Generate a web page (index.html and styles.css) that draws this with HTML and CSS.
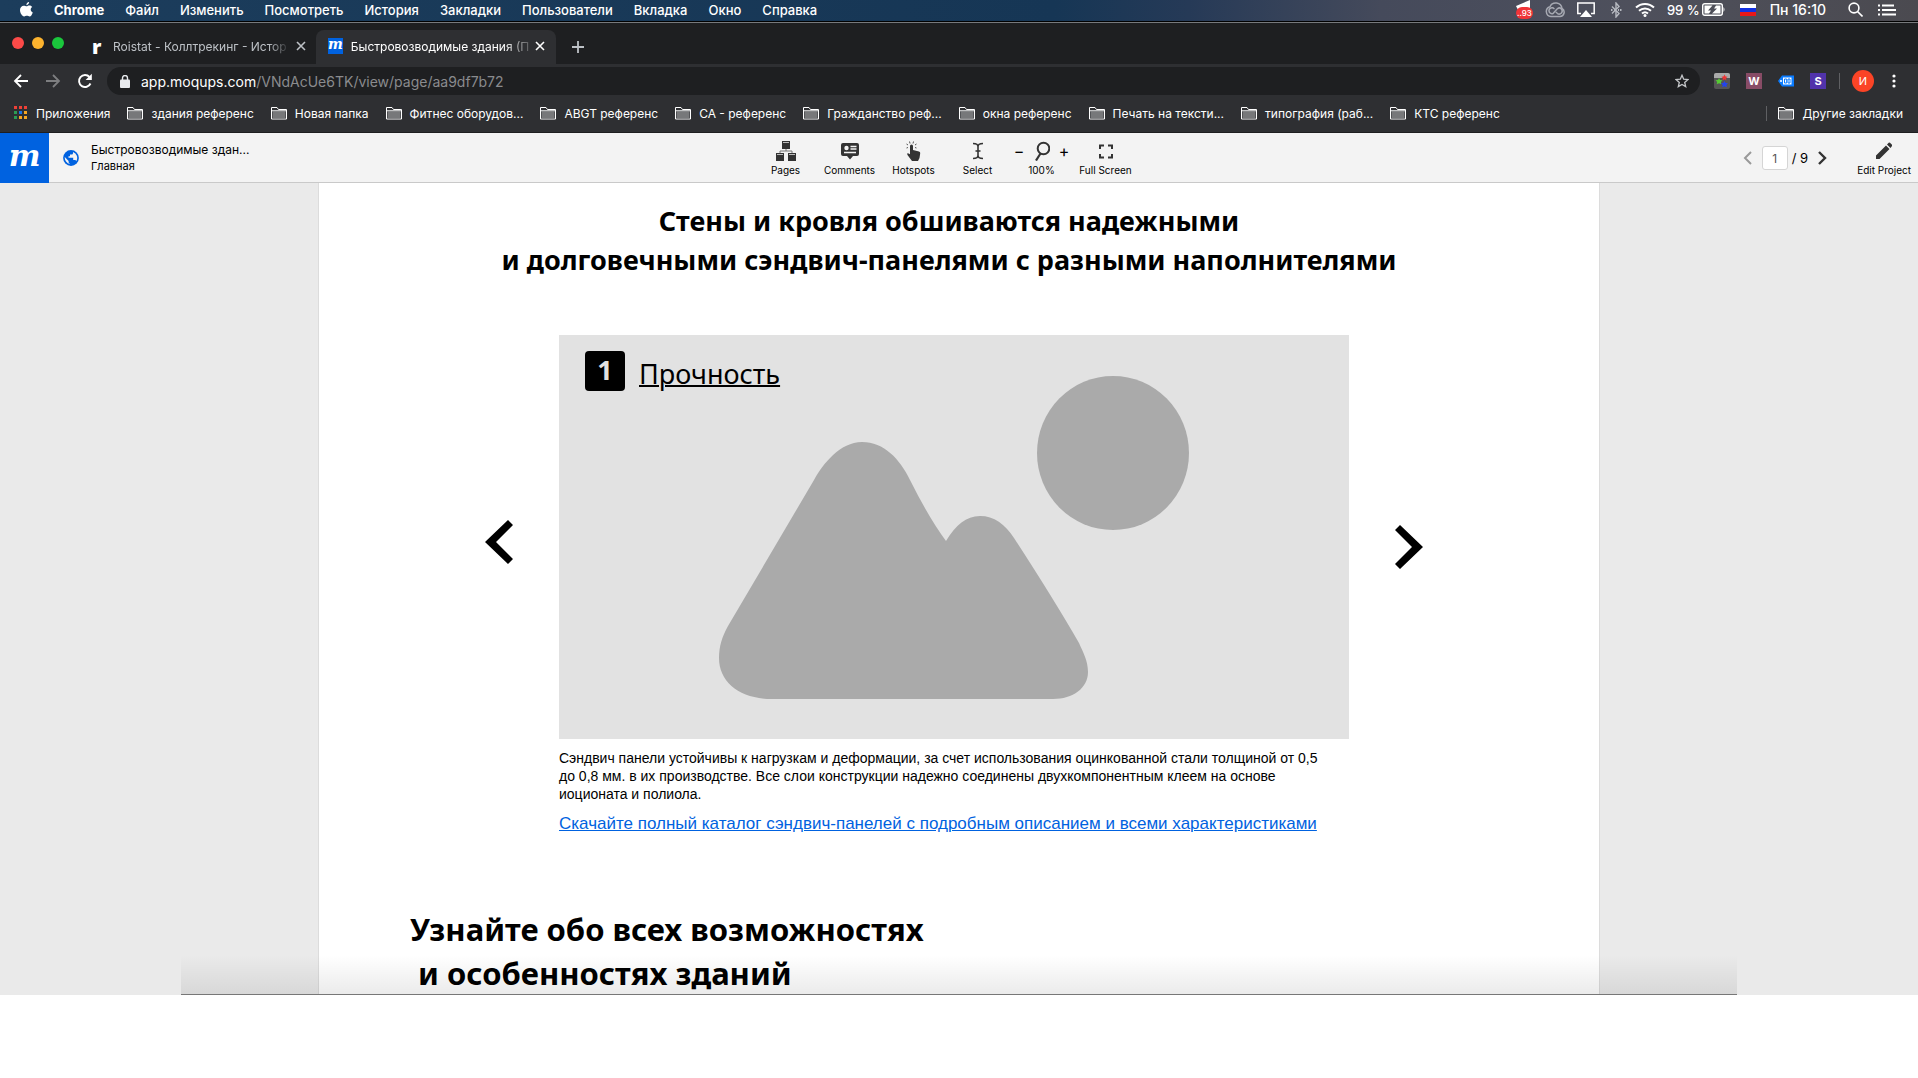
FILE: index.html
```html
<!DOCTYPE html>
<html lang="ru">
<head>
<meta charset="utf-8">
<title>Быстровозводимые здания</title>
<link rel="stylesheet" href="styles.css">
</head>
<body>
<svg class="defs" aria-hidden="true">
  <symbol id="folder" viewBox="0 0 16 14"><path d="M.5 13V1.5H6L7.500 3.500H15.500V13Z" fill="#2e2f32" stroke="#fff"/><path d="M1.500 5.500h13v7h-13z" fill="#77787a"/><path d="M.5 4.800h15" stroke="#fff"/></symbol>
  <symbol id="close" viewBox="0 0 10 10"><path d="M1 1l8 8M9 1L1 9" stroke="currentColor" stroke-width="1.600"/></symbol>
</svg>
<header class="menubar">
  <nav class="menus">
    <svg class="apple" viewBox="0 0 14 17"><path d="M9.800 0c.1 1.700-1.300 3.300-2.900 3.300C6.700 1.700 8.200.1 9.800 0zM7.200 4.500c.7 0 1.600-.8 3-.8 1.300 0 2.400.7 3 1.600-2.500 1.500-2 4.800.6 5.800-.6 1.700-2 4.400-3.500 4.400-1.100 0-1.500-.7-2.900-.7s-1.800.7-2.900.7C2.500 15.600 0 12 0 8.600c0-3 2-4.700 4-4.700 1.400 0 2.300.6 3.200.6z" fill="#fff"/></svg>
    <b>Chrome</b><span>Файл</span><span>Изменить</span><span>Посмотреть</span><span>История</span><span>Закладки</span><span>Пользователи</span><span>Вкладка</span><span>Окно</span><span>Справка</span>
  </nav>
  <div class="status">
    <div class="mail"><svg width="16" height="14" viewBox="0 0 16 14"><path d="M0 6L14 0v10H2z" fill="#fff"/></svg><span>..93</span></div>
    <svg class="cloud" width="20" height="16" viewBox="0 0 20 16" fill="none" stroke="#a6a9b2"><path d="M6 14.500A5 5 0 0 1 5 4.700 6.300 6.300 0 0 1 17 6.500 4.300 4.300 0 0 1 15 14.500Z" stroke-width="1.500"/><path d="M9.500 7L7.800 5.800A3 3 0 1 0 8 11.500L12.500 6.500A3 3 0 1 1 12.500 11.500L10.800 10" stroke-width="1.500"/></svg>
    <svg class="airplay" width="18" height="15" viewBox="0 0 18 15"><path d="M4 11.500H.8V1h16.400v10.500H14" fill="none" stroke="#fff" stroke-width="1.500"/><path d="M9 8l6 7H3z" fill="#fff"/></svg>
    <svg class="bt" width="12" height="16" viewBox="0 0 12 16"><path d="M2 4.500l7 7-3 3.500V1l3 3.500-7 7" fill="none" stroke="#b6b9c0" stroke-width="1.400"/><path d="M1 8h1.500M4 8h1M8 8h1M10 8h1.500" stroke="#b6b9c0" stroke-width="2"/></svg>
    <svg class="wifi" width="20" height="15" viewBox="0 0 20 15"><path d="M1 5.500a13 13 0 0 1 18 0M4 8.700a9 9 0 0 1 12 0M7 11.600a4.600 4.600 0 0 1 6 0" fill="none" stroke="#fff" stroke-width="2"/><circle cx="10" cy="13.500" r="1.500" fill="#fff"/></svg>
    <span class="charge">99 %</span>
    <svg class="battery" width="24" height="13" viewBox="0 0 24 13"><rect x=".7" y=".7" width="19.600" height="11.600" rx="2" fill="none" stroke="#fff" stroke-width="1.400"/><path d="M21.500 4q2 2.500 0 5z" fill="#fff"/><path d="M2.500 2.500h8L6 7.500h3l-2 3H2.500zM18.500 2.500H14l-2 3h3l-5 5h8.500z" fill="#fff"/></svg>
    <span class="flag"></span>
    <span class="clock">Пн 16:10</span>
    <svg class="find" width="15" height="15" viewBox="0 0 15 15" fill="none" stroke="#fff" stroke-width="1.600"><circle cx="6" cy="6" r="4.900"/><path d="M9.500 9.500l5 5"/></svg>
    <svg width="18" height="12" viewBox="0 0 18 12"><path d="M0 1.500h2M0 6h2M0 10.500h2M4 1.500h12M4 6h14M4 10.500h14" stroke="#fff" stroke-width="2"/></svg>
  </div>
</header>
<div class="window">
  <div class="tabs">
    <span class="light red"></span><span class="light yellow"></span><span class="light green"></span>
    <div class="tab"><b class="roistat">r</b><span class="name">Roistat - Коллтрекинг - Истор</span><button aria-label="Закрыть"><svg><use href="#close"/></svg></button></div>
    <div class="tab active"><i class="moq">m</i><span class="name">Быстровозводимые здания (П</span><button aria-label="Закрыть"><svg><use href="#close"/></svg></button></div>
    <button class="plus" aria-label="Новая вкладка"><svg width="12" height="12" viewBox="0 0 12 12"><path d="M6 0v12M0 6h12" stroke="#bdc1c6" stroke-width="1.800"/></svg></button>
  </div>
  <div class="toolbar">
    <button aria-label="Назад"><svg width="16" height="14" viewBox="0 0 16 14"><path d="M15 7H2M8 1L2 7l6 6" fill="none" stroke="#fff" stroke-width="1.800"/></svg></button>
    <button aria-label="Вперёд"><svg width="16" height="14" viewBox="0 0 16 14"><path d="M1 7h13M8 1l6 6-6 6" fill="none" stroke="#7d7e80" stroke-width="1.800"/></svg></button>
    <button aria-label="Обновить"><svg width="16" height="16" viewBox="0 0 16 16"><path d="M13.500 10.500A6 6 0 1 1 12.500 4" fill="none" stroke="#fff" stroke-width="1.900"/><path d="M14.800.8v6.200H8.600z" fill="#fff"/></svg></button>
    <div class="omnibox">
      <svg width="10" height="13" viewBox="0 0 10 13"><rect y="4.500" width="10" height="8.500" rx="1" fill="#e8eaed"/><path d="M2.500 5V3a2.500 2.500 0 0 1 5 0v2" fill="none" stroke="#e8eaed" stroke-width="1.400"/></svg>
      <a href="#">app.moqups.com<span>/VNdAcUe6TK/view/page/aa9df7b72</span></a>
      <svg class="star" width="14" height="14" viewBox="0 0 14 14"><path d="M7 1.300l1.700 3.900 4.200.4-3.200 2.800 1 4.200L7 10.400l-3.700 2.200 1-4.200L1.100 5.600l4.200-.4z" fill="none" stroke="#c4c6c9" stroke-width="1.300"/></svg>
    </div>
    <div class="extensions">
      <svg width="16" height="16" viewBox="0 0 16 16"><rect width="16" height="16" rx="2" fill="#555"/><path d="M0 2q0-2 2-2h12q2 0 2 2v3H0z" fill="#aaa"/><path d="M10.500 1.500l1 2 2 .3-1.500 1.500.4 2-1.900-1-2 1 .4-2-1.500-1.500 2.100-.3z" fill="#e33"/><path d="M5 5l1 2 2.500.3L6.800 9l.5 2.300L5 10.300l-2.300 1L3.200 9 1.500 7.300 4 7z" fill="#5c3"/><path d="M10.500 8l1.200 2 2.300.3-1.600 1.700.4 2.300-2.300-1-2.200 1 .4-2.300L7 10.300 9.300 10z" fill="#24e"/></svg>
      <b class="ext wine">W</b>
      <svg width="16" height="12" viewBox="0 0 16 12"><path d="M0 6l4-5.500h12v11H4z" fill="#0a7cff"/><path d="M5 2.500h8.500v7H5z" fill="#fff"/><path d="M6.500 4h2.200v4H6.500zM10 4h2v4h-2z" fill="none" stroke="#0a7cff"/><circle cx="3" cy="6" r="1" fill="#fff"/></svg>
      <b class="ext violet">S</b>
    </div>
    <span class="avatar">И</span>
    <button class="dots" aria-label="Меню"><svg width="4" height="14" viewBox="0 0 4 14" fill="#fff"><circle cx="2" cy="2" r="1.600"/><circle cx="2" cy="7" r="1.600"/><circle cx="2" cy="12" r="1.600"/></svg></button>
  </div>
  <nav class="bookmarks">
    <a href="#"><svg class="apps" width="14" height="14" viewBox="0 0 14 14"><path d="M0 0h3v3H0zM5 0h3v3H5zM10 0h3v3h-3z" fill="#ee4037"/><path d="M0 5h3v3H0zM0 10h3v3H0z" fill="#2c9c53"/><path d="M5 5h3v3H5z" fill="#1a73e8"/><path d="M10 5h3v3h-3zM5 10h3v3H5zM10 10h3v3h-3z" fill="#f6a623"/></svg>Приложения</a>
    <a href="#"><svg><use href="#folder"/></svg>здания референс</a>
    <a href="#"><svg><use href="#folder"/></svg>Новая папка</a>
    <a href="#"><svg><use href="#folder"/></svg>Фитнес оборудов...</a>
    <a href="#"><svg><use href="#folder"/></svg>ABGT референс</a>
    <a href="#"><svg><use href="#folder"/></svg>СА - референс</a>
    <a href="#"><svg><use href="#folder"/></svg>Гражданство реф...</a>
    <a href="#"><svg><use href="#folder"/></svg>окна референс</a>
    <a href="#"><svg><use href="#folder"/></svg>Печать на тексти...</a>
    <a href="#"><svg><use href="#folder"/></svg>типография (раб...</a>
    <a href="#"><svg><use href="#folder"/></svg>КТС референс</a>
    <a href="#" class="other"><svg><use href="#folder"/></svg>Другие закладки</a>
  </nav>
  <div class="appbar">
    <div class="project">
      <i class="logo">m</i>
      <svg width="16" height="16" viewBox="0 0 16 16"><circle cx="8" cy="8" r="7.900" fill="#0062e0"/><path d="M1.800 7l3.800 4v1.500l1.500 1.500A6.300 6.300 0 0 1 1.800 7zM10 2v1c0 1-.6 1.600-1.600 1.600H7v1.600H5.500v1.500h4.700v2.400h1.500c.8 0 1.300.5 1.500 1.100A6.200 6.200 0 0 0 10 2z" fill="#f3f3f3"/></svg>
      <div class="titles"><span>Быстровозводимые здан...</span><span class="sub">Главная</span></div>
    </div>
    <div class="tools">
      <button><svg width="20" height="20" viewBox="0 0 20 20"><path d="M6 0h8v8H6zM0 12h8v8H0zM12 12h8v8h-8z" fill="#333"/><path d="M10 8v2M4 12v-2h12v2" fill="none" stroke="#777"/><path d="M7 1.500h6M1 13.500h6M13 13.500h6" stroke="#bbb"/></svg>Pages</button>
      <button><svg width="18" height="20" viewBox="0 0 18 20"><path d="M2 2h14q2 0 2 2v9q0 2-2 2h-4l-3 3.500L6 15H2q-2 0-2-2V4q0-2 2-2z" fill="#333"/><circle cx="5.500" cy="7" r="2.200" fill="#f3f3f3"/><path d="M9.500 5.500h6M9.500 8h6M3 11.500h12" stroke="#f3f3f3" stroke-width="1.300"/></svg>Comments</button>
      <button><svg width="16" height="20" viewBox="0 0 16 20"><path d="M4 5q0-1.500 1.500-1.500T7 5v4l6 1.500q1.500.5 1.200 2L13.500 17l-1.500 3H6l-4.500-6q-1-2 .5-1.800l2 1z" fill="#333"/><path d="M2 6.500L.5 7M2 4L.5 3M4 2.500L3.500.5M7 2.500L7.500.5M9 4l1.500-1M9 6.500l1.500.5" stroke="#555"/></svg>Hotspots</button>
      <button><svg width="12" height="20" viewBox="0 0 12 20"><path d="M1 2.500q5 0 5 3v9q0 3 5 3M11 2.500q-5 0-5 3M6 14.500q0 3-5 3M3.500 10h5" fill="none" stroke="#333" stroke-width="1.600"/></svg>Select</button>
      <div class="zoom"><div><button aria-label="Уменьшить">−</button><svg width="16" height="20" viewBox="0 0 16 20"><circle cx="9.500" cy="7.500" r="5.800" fill="none" stroke="#333" stroke-width="2"/><path d="M6.500 12.500L2 19.500" stroke="#333" stroke-width="2.200"/></svg><button aria-label="Увеличить">+</button></div>100%</div>
      <button><svg width="14" height="20" viewBox="0 0 14 20"><path d="M1 8V4.500h4M9 4.500h4V8M13 13v3.500H9M5 16.500H1V13" fill="none" stroke="#333" stroke-width="2"/></svg>Full Screen</button>
    </div>
    <div class="pager">
      <button aria-label="Предыдущая"><svg width="9" height="14" viewBox="0 0 9 14"><path d="M8 1L2 7l6 6" fill="none" stroke="#999" stroke-width="2"/></svg></button>
      <input type="text" value="1" aria-label="Страница">
      <span>/ 9</span>
      <button aria-label="Следующая"><svg width="9" height="14" viewBox="0 0 9 14"><path d="M1 1l6 6-6 6" fill="none" stroke="#333" stroke-width="2.400"/></svg></button>
      <button class="edit"><svg width="16" height="20" viewBox="0 0 16 20"><path d="M0 18v-3.500L10 4.500 13.500 8l-10 10zM11 3.500l1.700-1.700q.7-.5 1.300 0l2 2q.5.600 0 1.300L14.500 7z" fill="#333"/></svg>Edit Project</button>
    </div>
  </div>
  <main class="stage">
    <article class="page">
      <h1>Стены и кровля обшиваются надежными<br>и долговечными сэндвич-панелями с разными наполнителями</h1>
      <section class="carousel">
        <button class="prev" aria-label="Назад"><svg width="29" height="44" viewBox="0 0 29 44"><path d="M0 22L23 0l5 5-17 17 17 17-5 5z"/></svg></button>
        <figure>
          <div class="picture">
            <svg viewBox="0 0 790 404"><ellipse cx="554" cy="118" rx="76" ry="77" fill="#aaa"/><path d="M255 145C264 129 281 107 303 107C325 107 341 124 351 145Q370 183 387 206C397 190 407 181 421 181C435 181 446 189 455 203Q494 263 520 308C524 317 529 326 529 337C529 353 514 364 494 364H213C182 364 160 348 160 323C160 311 163 302 169 291Z" fill="#aaa"/></svg>
            <div class="caption"><b>1</b><span>Прочность</span></div>
          </div>
          <figcaption>Сэндвич панели устойчивы к нагрузкам и деформации, за счет использования оцинкованной стали толщиной от 0,5<br>до 0,8 мм. в их производстве. Все слои конструкции надежно соединены двухкомпонентным клеем на основе<br>иоционата и полиола.</figcaption>
          <a href="#">Скачайте полный каталог сэндвич-панелей с подробным описанием и всеми характеристиками</a>
        </figure>
        <button class="next" aria-label="Вперёд"><svg width="29" height="44" viewBox="0 0 29 44"><path d="M29 22L6 0 1 5l17 17L1 39l5 5z"/></svg></button>
      </section>
      <h2>Узнайте обо всех возможностях<br>&nbsp;и особенностях зданий</h2>
    </article>
    <div class="dock-shadow"></div>
  </main>
</div>
</body>
</html>
```
FILE: styles.css
```css
* { box-sizing: border-box; }
body { margin: 0; background: #fff; font-family: Inter, "Noto Sans", sans-serif; }
button { border: 0; padding: 0; background: none; font: inherit; color: inherit; display: flex; align-items: center; justify-content: center; }
svg { display: block; flex: none; }
a { text-decoration: none; color: inherit; }
.defs { width: 0; height: 0; position: absolute; }

.menubar { height: 22px; padding: 0 22px 2px 20px; display: flex; align-items: center; justify-content: space-between; white-space: nowrap; color: #fff; font-size: 13px; font-weight: 500; background: linear-gradient(90deg, #1c3d5c, #163655 55%, #263a57 62%, #454a5b 72%, #4e505c 85%, #4b4a50); border-bottom: 1px solid #000; }
.menus { display: flex; align-items: center; gap: 21px; }
.apple { width: 13px; height: 16px; }
.menus b { font-weight: 700; }
.status { display: flex; align-items: center; }
.mail { display: grid; margin-right: 12px; }
.mail svg, .mail span { grid-area: 1 / 1; }
.mail span { margin-top: 7px; height: 12px; width: 17px; border-radius: 6px; background: #f03438; font-size: 8px; line-height: 12px; text-align: center; }
.cloud { margin-right: 12px; }
.airplay { margin-right: 15px; }
.bt { margin-right: 13px; }
.wifi { margin-right: 12px; }
.charge { margin-right: 2px; }
.battery { margin-right: 14px; }
.flag { width: 16px; height: 12px; margin-right: 14px; background: linear-gradient(#fff 33%, #1230e0 33% 66%, #e81818 66%); }
.clock { margin-right: 22px; font-size: 14px; }
.find { margin-right: 15px; }

.window { background: #2e2f32; color: #fff; border-top: 1px solid #77797c; }
.tabs { display: flex; height: 41px; padding-left: 12px; background: #1e1f21; font-size: 12px; white-space: nowrap; }
.light { width: 12px; height: 12px; border-radius: 50%; margin: 14px 8px 0 0; }
.red { background: #fc4a48; }
.yellow { background: #fdb32e; }
.green { background: #1ac73c; }
.tab { display: flex; align-items: center; width: 244px; height: 34px; margin-top: 7px; padding: 0 10px 2px 20px; color: #bdc1c6; }
.tab .name { flex: 1; -webkit-mask-image: linear-gradient(90deg, #000 88%, transparent); mask-image: linear-gradient(90deg, #000 88%, transparent); }
.tab svg { width: 10px; height: 10px; }
.tab button { margin-left: 6px; }
.roistat { width: 12px; margin-right: 9px; color: #fff; font: 800 20px "Open Sans", sans-serif; }
.active { width: 240px; padding: 0 11px 2px 12px; color: #fff; background: #2e2f32; border-radius: 8px 8px 0 0; }
.active .name { -webkit-mask-image: linear-gradient(90deg, #000 86%, transparent 104%); mask-image: linear-gradient(90deg, #000 86%, transparent 104%); }
.moq { width: 16px; height: 16px; margin-right: 8px; background: #0062e0; font: italic bold 14px/13px "DejaVu Serif", serif; text-align: center; }
.plus { margin-left: 16px; padding-top: 6px; }

.toolbar { display: flex; align-items: center; height: 36px; padding: 0 22px 2px 13px; }
.toolbar > button { width: 16px; margin-right: 16px; }
.omnibox { flex: 1; display: flex; align-items: center; height: 28px; margin-left: -2px; padding: 0 11px 0 13px; border-radius: 14px; background: #1e1f21; font-size: 14px; }
.omnibox a { flex: 1; margin-left: 11px; }
.omnibox span { color: #8a8b8e; }
.extensions { display: flex; align-items: center; gap: 16px; margin-left: 14px; padding-right: 13px; }
.ext { width: 16px; height: 16px; font-size: 11px; line-height: 16px; text-align: center; }
.wine { background: #884c66; }
.violet { background: #5133ab; }
.avatar { width: 36px; height: 22px; padding-left: 12px; position: relative; font-size: 11px; line-height: 22px; z-index: 0; text-align: center; background: linear-gradient(#5f6063, #5f6063) 0 50% / 1px 16px no-repeat; }
.avatar::before { content: ""; position: absolute; z-index: -1; left: 13px; top: 0; width: 22px; height: 22px; border-radius: 50%; background: #fb4426; }
.toolbar > .dots { width: 4px; margin: 0 0 0 17px; }

.bookmarks { display: flex; align-items: center; gap: 17px; height: 33px; padding: 0 15px 6px 14px; border-bottom: 1px solid #1e1e20; font-size: 12px; white-space: nowrap; }
.bookmarks a { display: flex; align-items: center; gap: 8px; }
.bookmarks svg { width: 16px; height: 14px; }
.bookmarks .apps { width: 14px; }
.bookmarks .other { margin-left: auto; padding-left: 11px; border-left: 1px solid #5f6063; }

.appbar { display: grid; grid-template-columns: 1fr auto 1fr; height: 50px; background: #f3f3f3; border-bottom: 1px solid #c9c9c9; color: #000; font-size: 10px; white-space: nowrap; }
.project { display: flex; align-items: center; }
.logo { width: 49px; height: 50px; margin-right: 14px; background: #0062e0; color: #fff; font: italic bold 30px/46px "DejaVu Serif", serif; text-align: center; }
.titles { display: flex; flex-direction: column; margin-left: 12px; font-size: 12px; line-height: 17px; }
.sub { font-size: 11px; }
.tools { display: grid; grid-template-columns: repeat(6, 64px); margin-right: 27px; }
.tools > *, .edit { display: flex; flex-direction: column; align-items: center; justify-content: flex-start; gap: 2px; padding-top: 8px; line-height: 14px; }
.zoom div { display: flex; align-items: center; justify-content: center; gap: 10px; }
.zoom button { font-size: 16px; width: 9px; }
.pager { display: flex; align-items: center; justify-content: flex-end; padding-right: 7px; font-size: 13px; }
.pager input { width: 26px; height: 24px; margin: 0 4px 0 10px; padding: 0; border: 1px solid #d5d5d5; border-radius: 3px; background: #fff; color: #555; font: 12px Inter, sans-serif; text-align: center; }
.pager span { margin-right: 10px; }
.pager .edit { margin-left: 30px; align-self: stretch; font-size: 10px; }

.stage { position: relative; overflow: hidden; background: #eaeaea; color: #000; }
.page { max-width: 1280px; margin: 0 auto; padding: 18px 0 0; background: #fff; box-shadow: 0 0 0 1px #dcdcdc; }
h1, h2 { margin: 0; font-family: "Noto Sans", sans-serif; font-weight: 700; white-space: nowrap; }
h1 { padding-right: 20px; text-align: center; font-size: 27px; line-height: 39px; }
.carousel { display: grid; grid-template-columns: 29px minmax(0, 790px) 29px; column-gap: 45px; justify-content: center; margin: 56px 10px 72px 0; align-items: start; }
.carousel button { height: 403px; }
.prev { padding-top: 10px; }
.carousel .next { padding-top: 20px; }
figure { margin: 0; font-family: "Liberation Sans", Arial, sans-serif; white-space: nowrap; }
.picture { display: grid; background: #e2e2e2; }
.picture > * { grid-area: 1 / 1; }
.picture svg { width: 100%; }
.caption { display: flex; align-items: flex-start; padding: 16px 26px; font: 27px/46px "Noto Sans", sans-serif; }
.caption b { width: 40px; height: 40px; margin-right: 14px; border-radius: 4px; background: #000; color: #e2e2e2; line-height: 38px; text-align: center; }
.caption span { text-decoration: underline; text-decoration-thickness: 2px; }
figcaption { margin: 10px 0; font-size: 14px; line-height: 18px; }
figure a { display: block; color: #0062e0; font-size: 17px; line-height: 22px; text-decoration: underline; }
h2 { padding-left: 91px; font-size: 31px; line-height: 44px; }
.dock-shadow { position: absolute; left: 181px; right: 181px; bottom: 0; height: 40px; border-bottom: 1px solid #777; background: linear-gradient(transparent, rgba(0, 0, 0, .08)); }
```
